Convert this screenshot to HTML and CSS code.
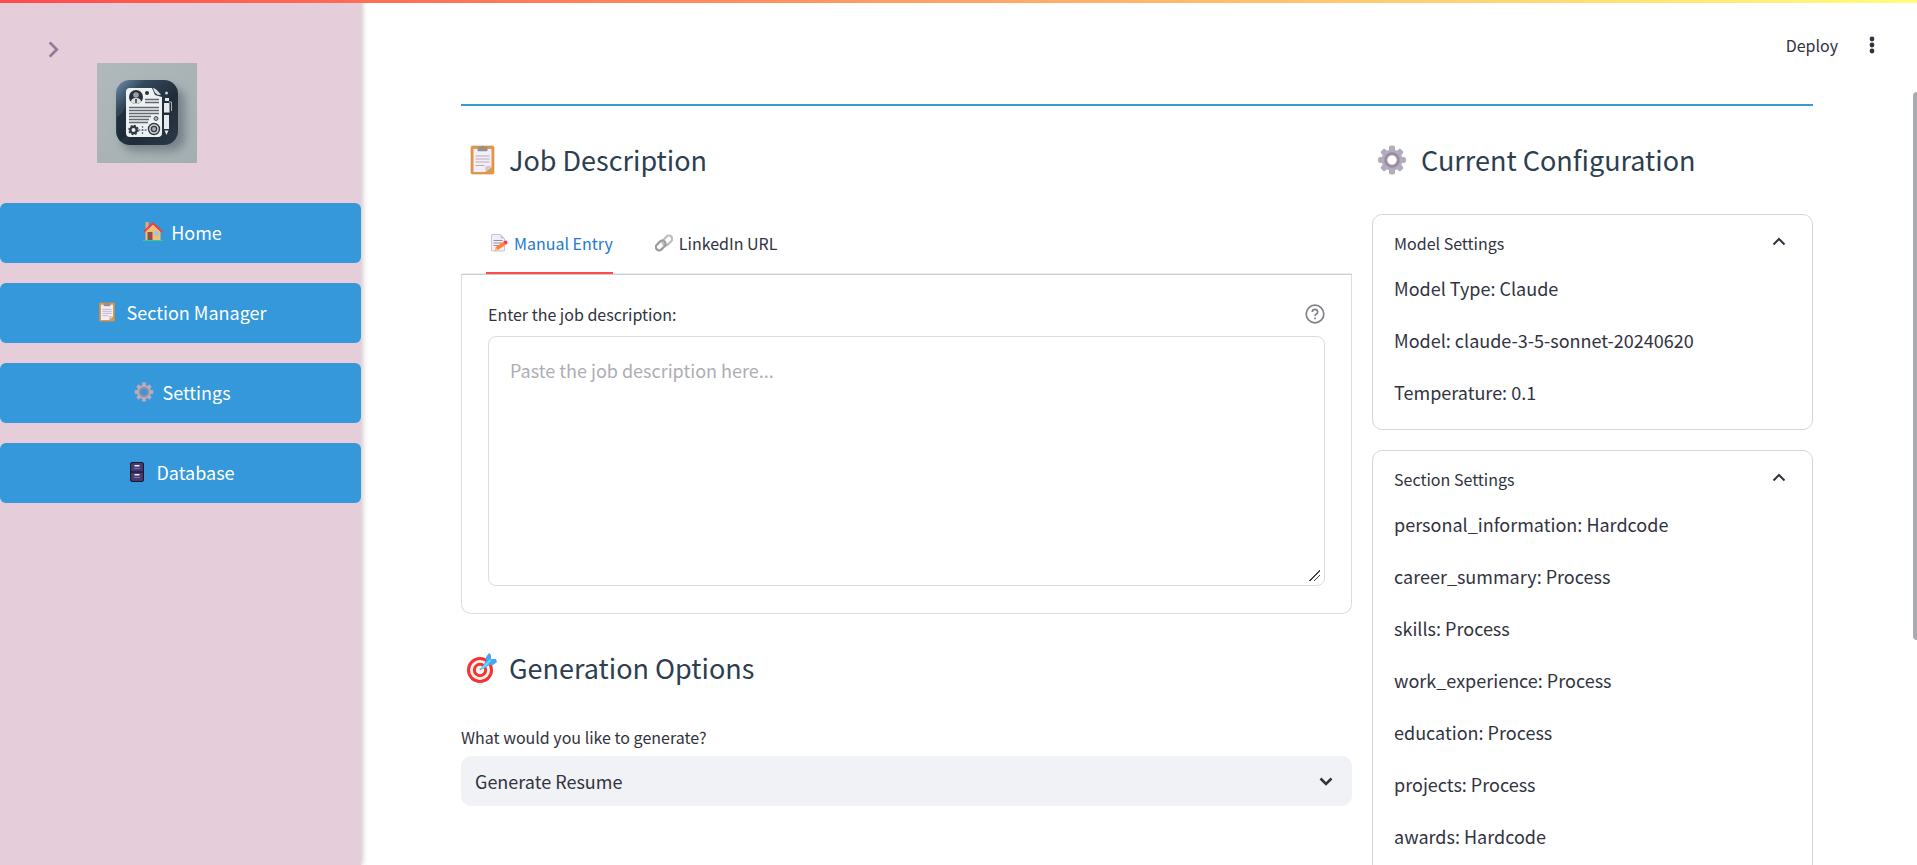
FILE: index.html
```html
<!DOCTYPE html>
<html lang="en">
<head>
<meta charset="utf-8">
<title>Resume Generator</title>
<link rel="stylesheet" href="styles.css">
</head>
<body>
<svg class="defs" aria-hidden="true">
  <defs>
    <linearGradient id="plate" x1="0" y1="0" x2="1" y2="1"><stop offset="0" stop-color="#6d8fae"/><stop offset=".25" stop-color="#34475a"/><stop offset=".6" stop-color="#202c39"/><stop offset="1" stop-color="#2b3948"/></linearGradient>
    <linearGradient id="wall" x1="0" y1="0" x2="1" y2="1"><stop offset="0" stop-color="#b0b9bb"/><stop offset="1" stop-color="#a3aeb1"/></linearGradient>
    <filter id="soft" x="-30%" y="-30%" width="160%" height="160%"><feGaussianBlur stdDeviation="4"/></filter>
  </defs>
  <symbol id="clipboard" viewBox="0 0 24 30">
    <rect x="0.500" y="1" width="23" height="28" rx="1.500" fill="#e2974a" stroke="#cf8a45" stroke-width=".6"/>
    <path d="M3 4h18v18l-6 5H3z" fill="#f3eef8"/>
    <path d="M15 27v-4.500a1.500 1.500 0 0 1 1.500-1.500H21z" fill="#cdc4d6"/>
    <path d="M7 5.500V3a1 1 0 0 1 1-1h2a2.200 2.200 0 0 1 4 0h2a1 1 0 0 1 1 1v2.500a.8.800 0 0 1-.8.800H7.800a.8.800 0 0 1-.8-.8z" fill="#998f92"/>
    <path d="M5 11h14M5 14h14M5 17h14M5 20.500h9" stroke="#b3abb8" stroke-width="1.200"/>
  </symbol>
  <symbol id="gear" viewBox="0 0 28 30">
    <g fill="#b4acbc">
      <circle cx="14" cy="15" r="10.500"/>
      <rect x="11" y="0.500" width="6" height="29" rx="2"/><rect x="0" y="12" width="28" height="6" rx="2"/>
      <g transform="rotate(45 14 15)"><rect x="11" y="1" width="6" height="28" rx="2"/><rect x="0" y="12" width="28" height="6" rx="2"/></g>
    </g>
    <circle class="hole" cx="14" cy="15" r="6.300" stroke="#998da5" stroke-width="3"/>
  </symbol>
</svg>
<div class="app">
  <aside class="sidebar">
    <button class="collapse" aria-label="Toggle sidebar">
      <svg viewBox="0 0 10 16"><path d="M1.500 1.500 8 8l-6.500 6.500" fill="none" stroke="#957a97" stroke-width="2.500"/></svg>
    </button>
    <svg class="logo" viewBox="0 0 100 100" role="img" aria-label="Resume logo">
      <rect width="100" height="100" fill="url(#wall)"/>
      <rect x="24" y="24" width="64" height="64" rx="14" fill="#57656d" opacity=".6" filter="url(#soft)"/>
      <rect x="19" y="17" width="62" height="65" rx="14" fill="url(#plate)"/>
      <path d="M20 54Q29 49 32 31v40l-9 7q-3-4-3-10z" fill="#18232f" opacity=".6"/>
      <path d="M33 25h22l3 7 7 2v36q0 4-4 4H33q-4 0-4-4V29q0-4 4-4z" fill="#eef1f1"/>
      <path d="M56 25q3 0 8 7-6 1-8-7z" fill="#dce0e2"/>
      <circle cx="39" cy="34" r="7" fill="#29323d"/>
      <circle cx="39" cy="32" r="2.800" fill="#9a9fa5"/><path d="M34 39q0-4 5-4t5 4q-5 4-10 0z" fill="#dfe2e4"/><path d="M39 36v4" stroke="#29323d" stroke-width="1.500"/>
      <circle cx="50" cy="30" r="2" fill="#29323d"/>
      <path d="M48 36.500h14M48 39.500h14M32 44.500h30M32 47.500h30M32 50.500h30M32 53.500h22M32 56.500h20M32 59.500h19" stroke="#626873" stroke-width="1.500"/>
      <circle cx="59" cy="55.500" r="2" fill="#a6aaae" stroke="#4a515b"/>
      <circle cx="36.500" cy="67" r="3.200" fill="none" stroke="#303944" stroke-width="2.400"/>
      <circle cx="36.500" cy="67" r="4.600" fill="none" stroke="#303944" stroke-width="1.400" stroke-dasharray="1.800 1.800"/>
      <path d="M45.500 63v8M41.500 67h8" stroke="#626873" stroke-width="1.300" stroke-dasharray="1.800 1.300"/>
      <circle cx="57" cy="66" r="5.500" fill="#cfd3d5" stroke="#303944" stroke-width="1.400"/><circle cx="57" cy="66" r="2.600" fill="#aab0b4" stroke="#303944" stroke-width="1.300"/>
      <circle cx="69.500" cy="30" r="1.500" fill="#c9d0d4"/>
      <path d="M68 35h4v3h-4zM67 40h5.500v9.500H67zM67 52h5v14h-5zM67.500 67.500h4L69.500 72z" fill="#e6eaec"/>
      <path d="M72 39h2.500v9" fill="none" stroke="#aab4bb" stroke-width="1"/>
    </svg>
    <nav class="nav">
      <button class="nav-btn">
        <svg viewBox="0 0 20 20"><path d="M2.500 0h3v7h-3z" fill="#e9a96f"/><path d="M2.500 9.500 10 2l7.500 7.500V18.500h-15z" fill="#f0bd7c"/><path d="M0 18h20v1H0z" fill="#2fd08a"/><path d="M4.500 10h5v8h-5z" fill="#8d5349"/><path d="M11.500 9.500h4v4h-4z" fill="#8bc9f5"/><path d="M.7 10.200 10 1.300l9.300 8.900" fill="none" stroke="#f83d37" stroke-width="1.800"/></svg>
        <span>Home</span></button>
      <button class="nav-btn"><svg class="narrow"><use href="#clipboard"/></svg><span>Section Manager</span></button>
      <button class="nav-btn"><svg><use href="#gear"/></svg><span>Settings</span></button>
      <button class="nav-btn">
        <svg class="cabinet" viewBox="0 0 14 20"><rect x=".5" y=".5" width="13" height="19" rx="1.500" fill="#433b6b" stroke="#1c1830"/><path d="M0 10h14" stroke="#1c1830" stroke-width="1.200"/><path d="M4.500 3h5v1.500h-5zM4.500 12h5v1.500h-5z" fill="#f3eef8"/><path d="M4 6.500h6M4 15.500h6" stroke="#8b62c8" stroke-width="1.200"/></svg>
        <span>Database</span></button>
    </nav>
  </aside>

  <main class="main">
    <header class="toolbar">
      <button class="deploy">Deploy</button>
      <button class="menu" aria-label="Main menu"><svg viewBox="0 0 6 18"><circle cx="3" cy="3" r="2.400"/><circle cx="3" cy="9" r="2.400"/><circle cx="3" cy="15" r="2.400"/></svg></button>
    </header>
    <div class="content">
      <hr class="rule">
      <div class="columns">
        <div class="col">
          <h2 class="heading"><svg><use href="#clipboard"/></svg>Job Description</h2>
          <section class="entry">
            <div class="tabs" role="tablist">
              <button class="tab active" role="tab" aria-selected="true">
                <svg viewBox="0 0 18 18"><path d="M1.500.5h9l4 4V17h-13z" fill="#f3eef8" stroke="#cdc4d6"/><path d="M10.500.5v4h4z" fill="#cdc4d6"/><path d="M3.500 6.500h9M3.500 9h9M3.500 11.500h6" stroke="#998ea5"/><path d="M4.500 16.800l1.300-3.700L14 7.500l2 3-8.200 5.500z" fill="#ff822d"/><path d="M4.500 16.800l1.300-3.700 2 2.900z" fill="#fcc27c"/><path d="M13.600 7.700l1.300-.9q1.500-.6 2.300.7t-.2 2.300l-1.300.9z" fill="#f8315a"/></svg>
                Manual Entry</button>
              <button class="tab" role="tab" aria-selected="false">
                <svg viewBox="0 0 18 18"><g fill="none" stroke-width="2.200"><rect x="6.800" y="3.200" width="11" height="6.600" rx="3.300" transform="rotate(-45 12.300 6.500)" stroke="#bebebe"/><rect x=".2" y="8.200" width="11" height="6.600" rx="3.300" transform="rotate(-45 5.700 11.500)" stroke="#9b9b9b"/></g></svg>
                LinkedIn URL</button>
            </div>
            <div class="panel">
              <div class="label-row">
                <label for="job">Enter the job description:</label>
                <button class="help" aria-label="Help"><svg viewBox="0 0 20 20" fill="none" stroke="#808089" stroke-width="1.700"><circle cx="10" cy="10" r="8.800"/><path d="M7.300 8q0-2.700 2.700-2.700T12.700 8q0 1.200-1.300 2T10 12"/><path d="M10 13.500v1.700"/></svg></button>
              </div>
              <textarea id="job" class="job" placeholder="Paste the job description here..."></textarea>
            </div>
          </section>
          <h2 class="heading options"><svg class="dart" viewBox="0 0 30 30"><circle cx="13" cy="17" r="13" fill="#f8312f"/><circle cx="13" cy="17" r="10" fill="#f4f4f4"/><circle cx="13" cy="17" r="7.200" fill="#f8312f"/><circle cx="13" cy="17" r="4.200" fill="#f4f4f4"/><path d="M13 17 24 6" stroke="#9a8fa0" stroke-width="1.500"/><path d="M15 14l4-6v-4l3-4 2 2v4h5l1 3-4 3h-4l-6 4z" fill="#46a4fb"/><path d="M14 15l9-9 1.500 1.500-8 8.500z" fill="#50e2ff"/></svg>Generation Options</h2>
          <label class="field-label" for="gen">What would you like to generate?</label>
          <div class="select-wrap">
            <select id="gen" class="select"><option>Generate Resume</option></select>
            <svg class="caret" viewBox="0 0 14 9"><path d="M1.500 1.500 7 7l5.500-5.500" fill="none" stroke="#31333f" stroke-width="2.600"/></svg>
          </div>
        </div>
        <div class="col">
          <h2 class="heading"><svg class="wide"><use href="#gear"/></svg>Current Configuration</h2>
          <details class="card" open>
            <summary>Model Settings<svg viewBox="0 0 14 9"><path d="M1.500 7.500 7 2l5.500 5.500" fill="none" stroke="#31333f" stroke-width="2"/></svg></summary>
            <p>Model Type: Claude</p><p>Model: claude-3-5-sonnet-20240620</p><p>Temperature: 0.1</p>
          </details>
          <details class="card" open>
            <summary>Section Settings<svg viewBox="0 0 14 9"><path d="M1.500 7.500 7 2l5.500 5.500" fill="none" stroke="#31333f" stroke-width="2"/></svg></summary>
            <p>personal_information: Hardcode</p><p>career_summary: Process</p><p>skills: Process</p><p>work_experience: Process</p><p>education: Process</p><p>projects: Process</p><p>awards: Hardcode</p>
          </details>
        </div>
      </div>
    </div>
    <div class="scroll-thumb"></div>
  </main>
  <div class="decoration"></div>
</div>
</body>
</html>
```
FILE: styles.css
```css
* { box-sizing: border-box; }
body {
  margin: 0;
  font-family: "Noto Sans CJK SC", "Open Sans", sans-serif;
  font-size: 18px;
  line-height: 32px;
  color: #31333f;
  background: #fff;
}
button, select, textarea { font: inherit; color: inherit; border: 0; padding: 0; background: none; }
button { cursor: pointer; }
svg { display: block; flex: none; }
.defs { position: absolute; width: 0; height: 0; }
.app { position: relative; display: flex; height: 100vh; overflow: hidden; }
.decoration { position: absolute; top: 0; left: 0; right: 0; z-index: 2; height: 3px; background: linear-gradient(90deg, #ff4b4b, #fffd80); }

.sidebar { flex: 0 0 361px; padding-top: 39px; background: #e5cdd9; box-shadow: 2px 0 5px rgba(0, 0, 0, .2); z-index: 1; }
.collapse { display: block; margin-left: 48px; height: 24px; }
.collapse svg { width: 11px; height: 19px; margin-bottom: 3px; }
.logo { width: 100px; height: 100px; margin-left: 97px; }
.nav { display: flex; flex-direction: column; gap: 20px; margin-top: 40px; }
.nav-btn { display: flex; align-items: center; justify-content: center; gap: 8px; height: 60px; padding: 0 0 2px 4px; border-radius: 6px; background: #3498db; color: #fff; }
.nav-btn svg { width: 20px; height: 20px; fill: #3498db; }
.nav-btn .narrow { width: 18px; margin-right: 2px; }
.nav-btn .cabinet { width: 14px; margin-right: 4px; }
.hole { fill: inherit; }

.main { position: relative; flex: 1; min-width: 0; background: #fff; }
.toolbar { display: flex; align-items: center; justify-content: flex-end; gap: 31px; height: 104px; padding: 0 42px 15px 0; font-size: 16px; }
.menu svg { width: 6px; height: 18px; fill: #31333f; }
.content { padding: 0 104px 0 100px; }
.rule { height: 2px; margin: 0; border: 0; background: #3498db; }
.columns { display: grid; grid-template-columns: 97fr 48fr; gap: 20px; padding-top: 32px; }
.heading { display: flex; align-items: center; gap: 14px; height: 44px; margin: 0; padding-left: 9px; font-size: 27px; font-weight: 400; color: #2c3e50; }
.heading svg { width: 25px; height: 30px; fill: #fff; }
.heading .wide { width: 30px; margin-left: -4px; }
.heading .dart { width: 30px; margin: 0 -2px 0 -3px; }

.entry { margin-top: 32px; }
.tabs { display: flex; gap: 38px; padding-left: 25px; height: 61px; border-bottom: 1px solid #ccc; box-shadow: inset 0 -1px #eee; font-size: 16px; }
.tab { display: flex; align-items: center; gap: 6px; padding-left: 4px; border-bottom: 2px solid transparent; }
.tab svg { width: 18px; height: 18px; }
.tab.active { color: #1f77d0; border-color: #ff4b4b; }
.panel { padding: 24px 26px 27px; border: 1px solid #ddd; border-top: 0; border-radius: 0 0 10px 10px; }
.label-row { display: flex; align-items: center; justify-content: space-between; height: 30px; margin-bottom: 7px; font-size: 16px; }
.help svg { width: 20px; height: 20px; }
.job { display: block; width: 100%; height: 250px; padding: 17px 21px; border: 1px solid #ddd; border-radius: 8px; resize: vertical; outline: 0; }
.job::placeholder { color: #adaeb3; opacity: 1; }
.job::-webkit-resizer { background: linear-gradient(135deg, transparent 48%, #444 48% 55%, transparent 55% 70%, #444 70% 77%, transparent 77%) 0 0 / 11px 11px no-repeat; }
.options { margin-top: 32px; }
.field-label { display: block; margin: 31px 0 3px; font-size: 16px; }
.select-wrap { display: grid; align-items: center; border-radius: 10px; background: #f0f2f6; }
.select { grid-area: 1 / 1; width: 100%; height: 50px; padding: 0 14px; appearance: none; }
.caret { grid-area: 1 / 1; justify-self: end; width: 14px; height: 9px; margin-right: 19px; pointer-events: none; }

.card { margin: 32px 0 0; padding: 13px 21px 21px; border: 1px solid #d6d6d9; border-radius: 10px; }
.card + .card { margin-top: 20px; }
.card summary { display: flex; align-items: center; justify-content: space-between; height: 30px; font-size: 16px; cursor: pointer; }
.card summary svg { width: 14px; height: 9px; margin: 0 5px 3px 0; }
.card p { margin: 0 0 20px; }
.card summary + p { margin-top: 14px; }
.card p:last-child { margin-bottom: 0; }
.scroll-thumb { position: absolute; top: 92px; right: 0; width: 4px; height: 548px; border-radius: 4px 0 0 4px; background: #a9abb0; }
```
